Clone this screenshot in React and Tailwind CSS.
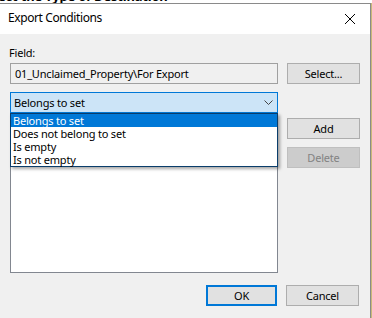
export default function App() {
  const font = { fontFamily: '"Noto Sans", "Open Sans", sans-serif' };
  return (
    <div
      className="relative w-[372px] h-[318px] overflow-hidden bg-[#c9b978] text-[11px] tracking-[-0.2px] text-black"
      style={font}
    >
      {/* background window peeking above */}
      <div className="h-[3px] overflow-hidden bg-white">
        <div className="-mt-[11px] -ml-[2px] text-[13px] font-bold leading-[14px] whitespace-nowrap">
          ect the Type of Destination
        </div>
      </div>

      <div className="w-[371px] h-[315px] flex flex-col border-t border-r border-[#8a8a8a] bg-[#f0f0f0]">
        {/* title bar */}
        <div className="h-[30px] flex items-center justify-between bg-white pl-[8px] pr-[10px]">
          <span className="text-[12px] tracking-[-0.4px] leading-none pb-[2px]">Export Conditions</span>
          <svg width="12" height="12" viewBox="0 0 12 12" className="mr-[4px]">
            <path d="M1 1 L11 11 M11 1 L1 11" stroke="#000" strokeWidth="1" fill="none" />
          </svg>
        </div>

        {/* body */}
        <div className="flex flex-col pl-[10px] pt-[10px]">
          <div className="h-[16px] leading-[18px] -ml-[1px]">Field:</div>

          <div className="mt-[3px] flex gap-[9px]">
            <div className="w-[268px] h-[21px] border border-[#a0a0a0] bg-[#f0f0f0] flex items-center pl-[4px] leading-none">
              01_Unclaimed_Property\For Export
            </div>
            <button className="w-[73px] h-[21px] border border-[#adadad] bg-[#e1e1e1] leading-none">
              Select...
            </button>
          </div>

          <div className="mt-[8px] w-[268px] h-[21px] border border-[#0078d7] bg-[#cce4f7] flex items-center justify-between pl-[3px] pr-[4px] leading-none">
            <span>Belongs to set</span>
            <svg width="9" height="6" viewBox="0 0 9 6">
              <path d="M0.5 0.5 L4.5 4.5 L8.5 0.5" stroke="#444" strokeWidth="1" fill="none" />
            </svg>
          </div>

          <div className="mt-[5px] flex gap-[9px]">
            <div className="w-[268px] h-[155px] border border-[#828790] bg-white" />
            <div className="flex flex-col gap-[8px]">
              <button className="w-[73px] h-[21px] border border-[#adadad] bg-[#e1e1e1] leading-none">
                Add
              </button>
              <button className="w-[73px] h-[21px] border border-[#bfbfbf] bg-[#cccccc] text-[#838383] leading-none">
                Delete
              </button>
            </div>
          </div>

          <div className="mt-[12px] flex justify-end gap-[9px] pr-[11px]">
            <button className="w-[71px] h-[21px] border-2 border-[#0078d7] bg-[#e1e1e1] leading-none">
              OK
            </button>
            <button className="w-[73px] h-[21px] border border-[#adadad] bg-[#e1e1e1] leading-none">
              Cancel
            </button>
          </div>
        </div>
      </div>

      {/* open dropdown list */}
      <div className="absolute left-[10px] top-[113px] w-[268px] border border-[#0a3d6b] bg-white shadow-[2px_2px_3px_rgba(0,0,0,0.35)]">
        <div className="h-[13px] leading-[13px] pl-[2px] bg-[#0078d7] text-white">Belongs to set</div>
        <div className="h-[13px] leading-[13px] pl-[2px]">Does not belong to set</div>
        <div className="h-[13px] leading-[13px] pl-[2px]">Is empty</div>
        <div className="h-[13px] leading-[13px] pl-[2px]">Is not empty</div>
      </div>
    </div>
  );
}
